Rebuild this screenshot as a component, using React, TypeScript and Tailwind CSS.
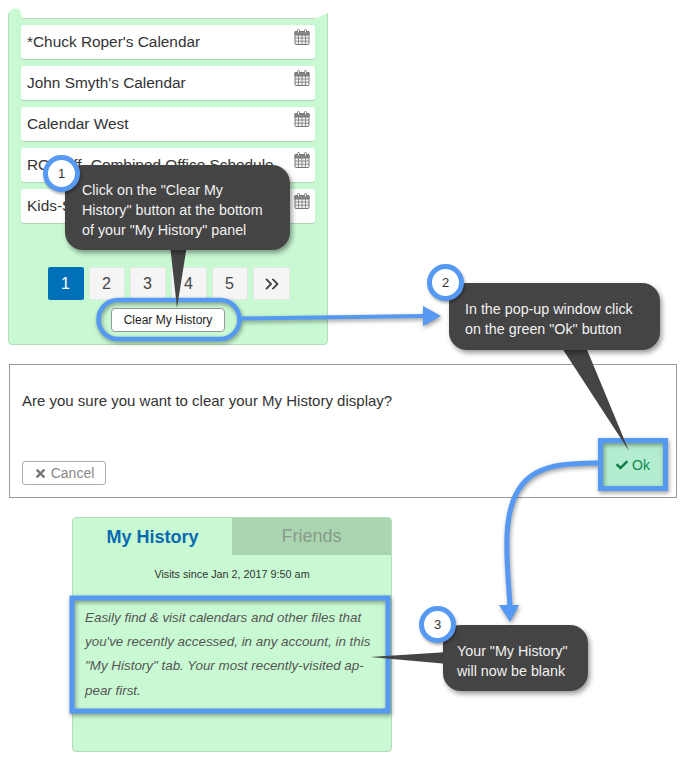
import { ChevronsRight } from 'lucide-react'
import { FaCheck, FaTimes } from 'react-icons/fa'

const CALENDARS = [
  '*Chuck Roper\'s Calendar',
  'John Smyth\'s Calendar',
  'Calendar West',
  'ROStaff -Combined Office Schedule',
  'Kids-Schedule',
]

const PAGES = ['1', '2', '3', '4', '5']

function CalendarIcon() {
  return (
    <svg className="mt-[4px] h-[16px] w-[16px] shrink-0" viewBox="0 0 16 16" fill="none" stroke="#777" strokeWidth="1">
      <rect x="1" y="2.5" width="14" height="13" rx="1" fill="#f4f4f4" />
      <path d="M1 2.5h14v3.5H1z" fill="#888" />
      <path d="M1 9h14M1 12.2h14M4.5 6v9.5M8 6v9.5M11.5 6v9.5" strokeWidth="0.8" />
      <rect x="3.5" y="0.5" width="2" height="3.5" rx="1" fill="#fff" />
      <rect x="10.5" y="0.5" width="2" height="3.5" rx="1" fill="#fff" />
    </svg>
  )
}

function Callout({ className, lines }: { className: string; lines: string[] }) {
  return (
    <div className={`absolute rounded-[18px] bg-[#444444] text-[14.3px] leading-[20px] text-[#f2f2f2] shadow-[2px_3px_5px_rgba(0,0,0,0.4)] ${className}`}>
      {lines.map((l) => (
        <div key={l} className="whitespace-nowrap">{l}</div>
      ))}
    </div>
  )
}

function Badge({ n, className }: { n: number; className: string }) {
  return (
    <div className={`absolute flex h-[37px] w-[37px] items-center justify-center rounded-full border-[5px] border-[#5599f2] bg-white text-[13px] font-medium text-[#333] shadow-[1px_2px_3px_rgba(0,0,0,0.35)] ${className}`}>
      {n}
    </div>
  )
}

export default function App() {
  return (
    <div className="relative h-[759px] w-[680px] overflow-hidden bg-white font-['Liberation_Sans',Arial,sans-serif]">
      {/* calendar list panel */}
      <div className="relative ml-[8px] flex h-[345px] w-[320px] flex-col items-center rounded-b-[4px] border border-[#b5dcbc] bg-[#c9f9d3] pt-[24px]">
        <svg className="absolute -left-px -top-px h-[20px] w-[322px]" viewBox="0 0 322 20">
          <path d="M0 0H322V13H320C316 14 312 18 307 18H17C13 18 13 12 12 10C9 8 3 8 0 14Z" fill="#fff" />
          <path d="M15 18.5H307" stroke="#c4d8c8" strokeWidth="1" />
        </svg>
        <div className="flex w-[294px] flex-col gap-[7px]">
          {CALENDARS.map((name) => (
            <div key={name} className="flex h-[34px] items-start justify-between rounded-[3px] bg-white pl-[6px] pr-[5px] shadow-[0_1px_1px_rgba(0,0,0,0.15)]">
              <span className="min-w-0 overflow-hidden whitespace-nowrap text-[15.4px] leading-[33px] text-[#333]">{name}</span>
              <CalendarIcon />
            </div>
          ))}
        </div>
        <div className="ml-[2px] mt-[44px] flex gap-[5px]">
          {PAGES.map((p, i) => (
            <div
              key={p}
              className={`flex h-[33px] w-[36px] items-center justify-center rounded-[2px] pr-[1px] text-[16px] ${i === 0 ? 'bg-[#0070b8] text-white' : 'border border-[#e4e8e4] bg-[#f5f5f5] text-[#444]'}`}
            >
              {p}
            </div>
          ))}
          <div className="flex h-[33px] w-[37px] items-center justify-center rounded-[2px] border border-[#e4e8e4] bg-[#f5f5f5] text-[#444]">
            <ChevronsRight size={22} strokeWidth={2} />
          </div>
        </div>
        <button className="mt-[8px] h-[24px] w-[114px] rounded-[4px] border border-[#999] bg-white text-[12px] text-[#222]">
          Clear My History
        </button>
      </div>

      {/* confirm dialog */}
      <div className="ml-[9px] mt-[19px] flex h-[134px] w-[668px] flex-col border border-[#999] bg-white px-[12px]">
        <p className="mt-[26px] text-[15px] leading-[20px] text-[#333]">Are you sure you want to clear your My History display?</p>
        <div className="flex flex-1 items-end justify-between">
          <button className="mb-[12px] flex h-[24px] w-[84px] items-center justify-center gap-[4px] rounded-[3px] border border-[#aaa] text-[14px] text-[#888]">
            <FaTimes size={13} className="text-[#777]" />
            Cancel
          </button>
          <button className="mb-[10px] mr-[1px] flex h-[44px] w-[60px] items-center justify-center gap-[4px] bg-[#b3eccf] text-[14px] text-[#108a50]">
            <FaCheck size={12} className="text-[#0b7a45]" />
            Ok
          </button>
        </div>
      </div>

      {/* my history panel */}
      <div className="ml-[72px] mt-[19px] h-[235px] w-[320px] overflow-hidden rounded-[4px] border border-[#b5dcbc] bg-[#c9f9d3]">
        <div className="flex h-[37px]">
          <div className="w-[160px] text-center text-[18px] font-bold leading-[39px] text-[#0a6ab0]">My History</div>
          <div className="w-[160px] bg-[#a9d6b0] text-center text-[18px] leading-[37px] text-[#8a9a8c]">Friends</div>
        </div>
        <div className="mt-[11px] text-center text-[10.8px] leading-[16px] text-[#333]">Visits since Jan 2, 2017 9:50 am</div>
        <p className="ml-[12px] mt-[24px] w-[300px] text-[13.4px] italic leading-[24.2px] text-[#555]">
          Easily find &amp; visit calendars and other files that<br />
          you've recently accessed, in any account, in this<br />
          "My History" tab. Your most recently-visited ap-<br />
          pear first.
        </p>
      </div>

      {/* annotations */}
      <svg className="absolute left-0 top-0 h-[759px] w-[680px] drop-shadow-[1px_2px_2px_rgba(0,0,0,0.4)]" viewBox="0 0 680 759" fill="none">
        <rect x="98.5" y="300" width="141" height="39" rx="19.5" stroke="#5599f2" strokeWidth="4.5" />
        <path d="M240 318.5 L424 316" stroke="#5599f2" strokeWidth="4" />
        <path d="M423 306 L441 316 L423 326Z" fill="#5599f2" />
        <rect x="600.5" y="440.5" width="65" height="48" stroke="#5599f2" strokeWidth="5" />
        <path d="M600 463 C555 464 510 462 507 535 C506 565 509 585 510 607" stroke="#5599f2" strokeWidth="5" />
        <path d="M499 605 L519 605 L510 622Z" fill="#5599f2" />
        <rect x="72" y="598" width="316" height="113" stroke="#5599f2" strokeWidth="5" />
      </svg>

      <svg className="absolute left-0 top-0 h-[759px] w-[680px]" viewBox="0 0 680 759">
        <path d="M170 245 L187 245 L177 308Z" fill="#444" />
        <path d="M560 345 L585 345 L629 451Z" fill="#444" />
        <path d="M448 652 L448 664 L370 657Z" fill="#444" />
      </svg>

      <Callout className="left-[65px] top-[165px] h-[85px] w-[225px] pl-[17px] pt-[15px]" lines={['Click on the "Clear My', 'History" button at the bottom', 'of your "My History" panel']} />
      <Callout className="left-[449px] top-[283px] h-[67px] w-[211px] pl-[16px] pt-[16px]" lines={['In the pop-up window click', 'on the green "Ok" button']} />
      <Callout className="left-[443px] top-[625px] h-[66px] w-[145px] pl-[14px] pt-[16px]" lines={['Your "My History"', 'will now be blank']} />

      <Badge n={1} className="left-[43px] top-[155px]" />
      <Badge n={2} className="left-[427px] top-[264px]" />
      <Badge n={3} className="left-[419px] top-[606px]" />
    </div>
  )
}
